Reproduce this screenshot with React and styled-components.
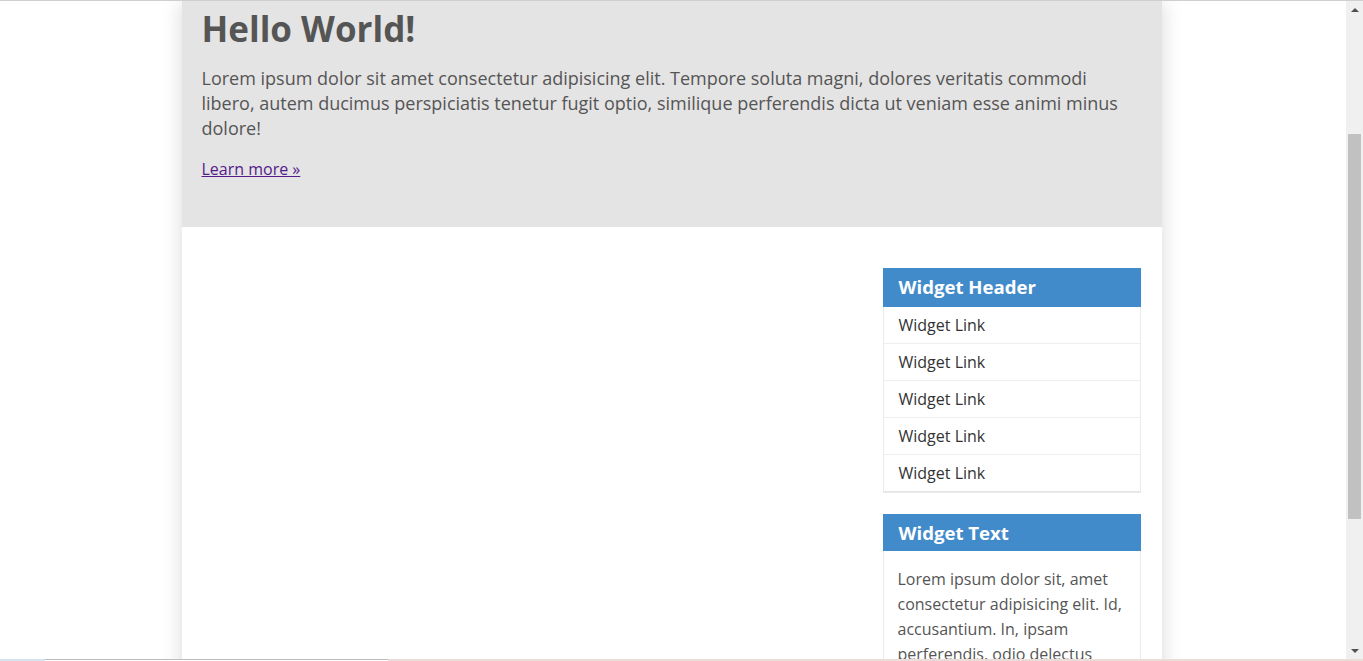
import React from 'react';
import styled, {createGlobalStyle} from 'styled-components';

const GlobalStyle = createGlobalStyle`
    html, body {
        margin: 0;
        padding: 0;
        height: 100%;
        overflow: hidden;
    }
    body {
        font-family: "Open Sans", "Noto Sans", sans-serif;
        color: #555;
        background: #fff;
    }
`;

const links = ["Widget Link", "Widget Link", "Widget Link", "Widget Link", "Widget Link"];

function App() {
    return (
        <>
            <GlobalStyle />
            <Screen>
                <TopEdge />
                <Window>
                    <Page>
                        <Container>
                            <Jumbotron>
                                <Title>Hello World!</Title>
                                <Lead>
                                    Lorem ipsum dolor sit amet consectetur adipisicing elit. Tempore soluta magni, dolores veritatis commodi
                                    libero, autem ducimus perspiciatis tenetur fugit optio, similique perferendis dicta ut veniam esse animi minus
                                    dolore!
                                </Lead>
                                <More href="#">Learn more »</More>
                            </Jumbotron>
                            <Body>
                                <Main />
                                <Sidebar>
                                    <Widget>
                                        <WidgetHeader>Widget Header</WidgetHeader>
                                        {links.map((l, i) => (
                                            <WidgetLink key={i} last={i === links.length - 1}>{l}</WidgetLink>
                                        ))}
                                    </Widget>
                                    <Widget>
                                        <WidgetHeader small>Widget Text</WidgetHeader>
                                        <WidgetText>
                                            Lorem ipsum dolor sit, amet consectetur adipisicing elit. Id, accusantium. In, ipsam
                                            perferendis, odio delectus
                                        </WidgetText>
                                    </Widget>
                                </Sidebar>
                            </Body>
                        </Container>
                    </Page>
                    <Scrollbar>
                        <ArrowButton><Arrow up /></ArrowButton>
                        <Track>
                            <Thumb />
                        </Track>
                        <ArrowButton><Arrow /></ArrowButton>
                    </Scrollbar>
                </Window>
                <Taskbar>
                    <TaskItem color="#d6e4ef" width="45px" />
                    <TaskItem color="#fff" width="343px" bordered />
                    <TaskItem color="#eadcd8" width="auto" grow />
                </Taskbar>
            </Screen>
        </>
    );
}

export default App;

const Screen = styled.div`
    width: 100%;
    height: 100vh;
    display: flex;
    flex-direction: column;
    overflow: hidden;
`;
const TopEdge = styled.div`
    height: 1px;
    flex-shrink: 0;
    background: #cfcfcf;
`;
const Window = styled.div`
    flex: 1;
    display: flex;
    min-height: 0;
`;
const Page = styled.div`
    flex: 1;
    display: flex;
    justify-content: center;
    overflow: hidden;
`;
const Container = styled.div`
    width: 980px;
    margin-left: -3px;
    background: #fff;
    box-shadow: 0 0 20px rgba(0,0,0,0.15);
    display: flex;
    flex-direction: column;
    align-self: flex-start;
    min-height: 900px;
`;
const Jumbotron = styled.div`
    background: #e4e4e4;
    padding: 6px 20px 47px;
`;
const Title = styled.h1`
    margin: 0 0 15px;
    font-size: 35px;
    font-weight: 700;
    line-height: 44px;
    color: #555;
`;
const Lead = styled.p`
    margin: 0 0 17px;
    font-size: 18px;
    line-height: 25px;
    color: #555;
`;
const More = styled.a`
    font-size: 16px;
    line-height: 22px;
    color: #551a8b;
    text-decoration: underline;
`;
const Body = styled.div`
    display: flex;
    padding: 41px 21px 0 20px;
    gap: 20px;
`;
const Main = styled.div`
    flex: 1;
`;
const Sidebar = styled.div`
    width: 258px;
    display: flex;
    flex-direction: column;
    gap: 21px;
`;
const Widget = styled.div`
    border: 1px solid #ebebeb;
    border-top: none;
    background: #fff;
`;
const WidgetHeader = styled.div`
    background: #428bca;
    color: #fff;
    font-weight: 700;
    font-size: 18.6px;
    height: ${p => p.small ? "37px" : "39px"};
    line-height: ${p => p.small ? "38px" : "37px"};
    padding: 0 16px;
    margin: 0 -1px;
`;
const WidgetLink = styled.div`
    height: 36px;
    line-height: 36px;
    padding: 0 15px;
    font-size: 16px;
    color: #333;
    border-bottom: 1px solid ${p => p.last ? "#e4e4e4" : "#eeeeee"};
`;
const WidgetText = styled.p`
    margin: 0;
    padding: 16px 14px 15px;
    font-size: 16px;
    line-height: 25px;
    color: #555;
`;
const Scrollbar = styled.div`
    width: 17px;
    flex-shrink: 0;
    background: #f0f0f0;
    display: flex;
    flex-direction: column;
`;
const ArrowButton = styled.div`
    height: 17px;
    display: flex;
    align-items: center;
    justify-content: center;
`;
const Arrow = styled.div`
    width: 0;
    height: 0;
    border-left: 4px solid transparent;
    border-right: 4px solid transparent;
    ${p => p.up ? "border-bottom: 4px solid #505050;" : "border-top: 4px solid #505050;"}
`;
const Track = styled.div`
    flex: 1;
    padding: 116px 2px 0;
`;
const Thumb = styled.div`
    height: 385px;
    background: #c1c1c1;
`;
const Taskbar = styled.div`
    height: 2px;
    flex-shrink: 0;
    display: flex;
`;
const TaskItem = styled.div`
    width: ${p => p.width};
    flex: ${p => p.grow ? 1 : "none"};
    background: ${p => p.color};
    border-top: ${p => p.bordered ? "1px solid #bbb" : "none"};
    box-sizing: border-box;
`;
